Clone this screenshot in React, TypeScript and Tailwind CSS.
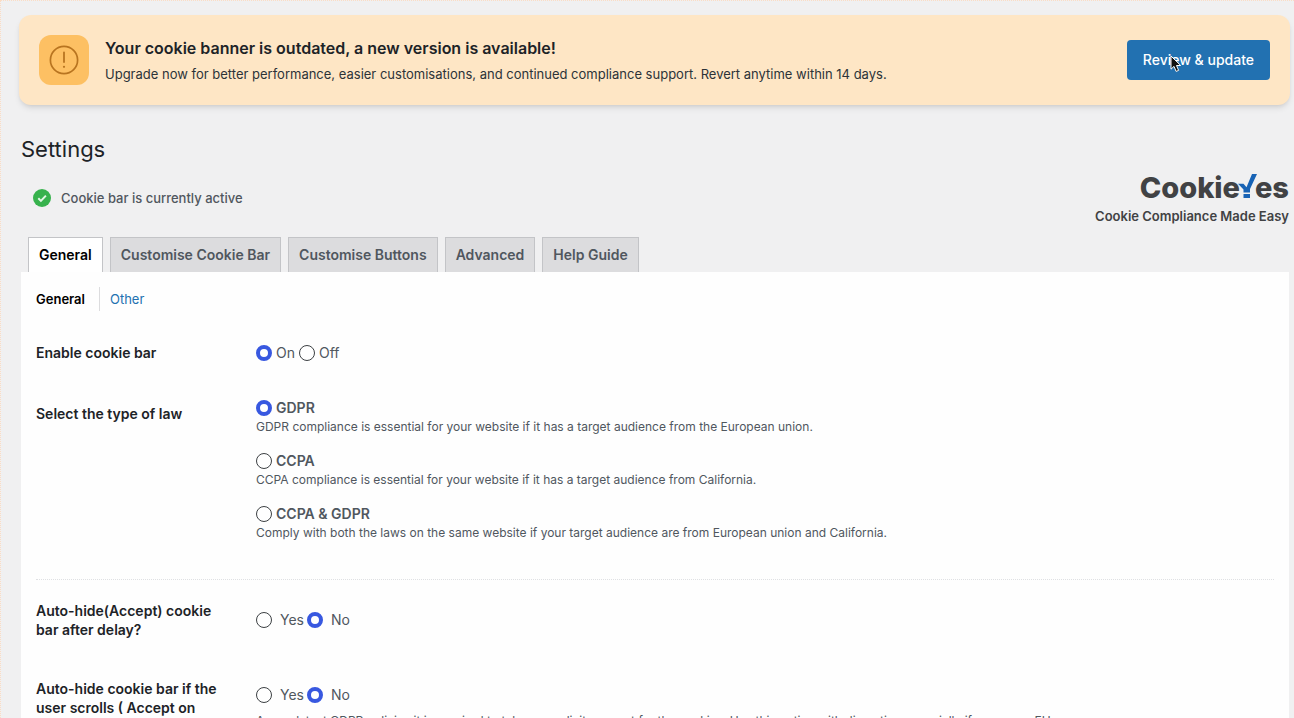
import { useState } from "react";

const tabs = ["General", "Customise Cookie Bar", "Customise Buttons", "Advanced", "Help Guide"];

const laws = [
  { id: "gdpr", name: "GDPR", note: "GDPR compliance is essential for your website if it has a target audience from the European union." },
  { id: "ccpa", name: "CCPA", note: "CCPA compliance is essential for your website if it has a target audience from California." },
  {
    id: "both",
    name: "CCPA & GDPR",
    note: "Comply with both the laws on the same website if your target audience are from European union and California.",
  },
];

const radioClass =
  "size-4 shrink-0 appearance-none rounded-full border border-[#3c4043] bg-white checked:border-4 checked:border-[#3858e0]";

function Choice({ name, options, value, wide }: { name: string; options: string[]; value: string; wide?: boolean }) {
  const [picked, setPicked] = useState(value);
  return (
    <div className={`flex items-center text-sm leading-5 text-[#50575e] ${wide ? "gap-[3px]" : "gap-1"}`}>
      {options.map((option) => (
        <label key={option} className={wide ? "flex items-center gap-2" : "flex items-center gap-1"}>
          <input
            type="radio"
            name={name}
            checked={picked === option}
            onChange={() => setPicked(option)}
            className={radioClass}
          />
          {option}
        </label>
      ))}
    </div>
  );
}

function Banner() {
  return (
    <section className="ml-[18px] mr-1 flex items-center rounded-xl bg-[#fee6c5] px-5 py-5 shadow-md">
      <div className="flex size-[50px] shrink-0 items-center justify-center rounded-xl bg-[#fdc063]">
        <svg viewBox="0 0 30 30" className="size-[30px]" fill="none" stroke="#b87420" aria-hidden="true">
          <circle cx="15" cy="15" r="13.6" strokeWidth="1.7" />
          <path d="M15 7.5v9.5" strokeWidth="1.8" strokeLinecap="round" />
          <circle cx="15" cy="21.8" r="1.1" fill="#b87420" stroke="none" />
        </svg>
      </div>
      <div className="ml-4 flex-1">
        <h2 className="text-base font-semibold leading-6 text-[#1d2327]">
          Your cookie banner is outdated, a new version is available!
        </h2>
        <p className="mt-1 text-[13px] leading-5 text-[#2c3338]">
          Upgrade now for better performance, easier customisations, and continued compliance support. Revert anytime
          within 14 days.
        </p>
      </div>
      <div className="relative">
        <button type="button" className="h-10 rounded bg-[#2271b1] px-4 text-sm font-medium text-white">
          Review &amp; update
        </button>
        <svg viewBox="0 0 12 18" className="absolute left-[43px] top-[15px] h-[18px] w-3" aria-hidden="true">
          <path
            d="M1 1v13.2l3-2.8 2.1 5 2.5-1-2.1-4.9h4.2z"
            fill="#111"
            stroke="#fff"
            strokeWidth="1"
            strokeLinejoin="round"
          />
        </svg>
      </div>
    </section>
  );
}

function Logo() {
  return (
    <div className="flex flex-col items-end text-[#414244]">
      <div className="flex items-baseline text-[29px] font-extrabold leading-8" aria-label="CookieYes">
        <span>Cookie</span>
        <svg viewBox="0 0 19 24" className="-mx-0.5 h-6 w-[19px]" fill="#1863b5" aria-hidden="true">
          <path d="M0 9.800h5.500l3 3.400L14 0h5L12 15v3.500H5.500V15.500z" />
          <path d="M5.500 20H12v4H5.500z" />
        </svg>
        <span>es</span>
      </div>
      <p className="mt-0.5 text-[13px] font-semibold leading-5">Cookie Compliance Made Easy</p>
    </div>
  );
}

const rowClass = "grid grid-cols-[220px_1fr]";
const headClass = "w-[190px] text-sm font-semibold leading-[19px] text-[#1d2327]";
const noteClass = "text-xs leading-4 text-[#50575e]";

export default function App() {
  const [tab, setTab] = useState("General");
  const [law, setLaw] = useState("gdpr");
  return (
    <div className="h-screen overflow-hidden border-l border-t border-dotted border-[#fbdcc4] bg-[#f0f0f1] pt-3.5 font-['Inter','Liberation_Sans',sans-serif]">
      <Banner />
      <main className="ml-5 mr-[5px]">
        <h1 className="mt-7 text-[22px] leading-8 text-[#1d2327]">Settings</h1>
        <div className="mt-[7px] flex items-start justify-between">
          <p className="mt-4 flex items-center gap-2.5 pl-3 text-[13px] font-medium leading-5 text-[#50575e]">
            <svg viewBox="0 0 18 18" className="size-[18px]" aria-hidden="true">
              <circle cx="9" cy="9" r="9" fill="#37b24d" />
              <path d="M5.300 9.300l2.600 2.600 5-5.300" fill="none" stroke="#e2f6e5" strokeWidth="2" />
            </svg>
            Cookie bar is currently active
          </p>
          <Logo />
        </div>
        <nav className="mt-[11px] flex gap-[7px] pl-[7px]">
          {tabs.map((name) => (
            <button
              key={name}
              type="button"
              onClick={() => setTab(name)}
              className={
                name === tab
                  ? "h-[35px] border border-b-0 border-[#c3c4c7] bg-white px-2.5 text-sm font-semibold text-black"
                  : "h-[35px] border border-b-0 border-[#c3c4c7] bg-[#dcdcde] px-2.5 text-sm font-semibold text-[#50575e]"
              }
            >
              {name}
            </button>
          ))}
        </nav>
        <div className="bg-[#fefefe] px-[15px] pb-10 pt-[15px]">
          <div className="flex items-center text-[13px] leading-6">
            <a href="#general" className="border-r border-[#dcdcde] pr-3.5 font-semibold text-black">
              General
            </a>
            <a href="#other" className="pl-2.5 text-[#2271b1]">
              Other
            </a>
          </div>

          <div className={`${rowClass} mt-8`}>
            <h3 className={headClass}>Enable cookie bar</h3>
            <Choice name="enable" options={["On", "Off"]} value="On" />
          </div>

          <div className={`${rowClass} mt-[35px]`}>
            <h3 className={`${headClass} pt-1.5`}>Select the type of law</h3>
            <div className="flex flex-col gap-4">
              {laws.map((item) => (
                <div key={item.id}>
                  <label className="flex items-center gap-1 text-sm font-semibold leading-5 text-[#50575e]">
                    <input
                      type="radio"
                      name="law"
                      checked={law === item.id}
                      onChange={() => setLaw(item.id)}
                      className={radioClass}
                    />
                    {item.name}
                  </label>
                  <p className={`${noteClass} mt-px`}>{item.note}</p>
                </div>
              ))}
            </div>
          </div>

          <hr className="mt-[38px] border-0 border-t border-dotted border-[#dfe0e3]" />

          <div className={`${rowClass} mt-[21px] items-center`}>
            <h3 className={headClass}>Auto-hide(Accept) cookie bar after delay?</h3>
            <Choice name="delay" options={["Yes", "No"]} value="No" wide />
          </div>

          <div className={`${rowClass} mt-10`}>
            <h3 className={headClass}>Auto-hide cookie bar if the user scrolls ( Accept on Scroll)?</h3>
            <div className="pt-1.5">
              <Choice name="scroll" options={["Yes", "No"]} value="No" wide />
              <p className={`${noteClass} mt-2`}>
                As per latest GDPR policies it is required to take an explicit consent for the cookies. Use this option
                with discretion especially if you serve EU
              </p>
            </div>
          </div>
        </div>
      </main>
    </div>
  );
}
